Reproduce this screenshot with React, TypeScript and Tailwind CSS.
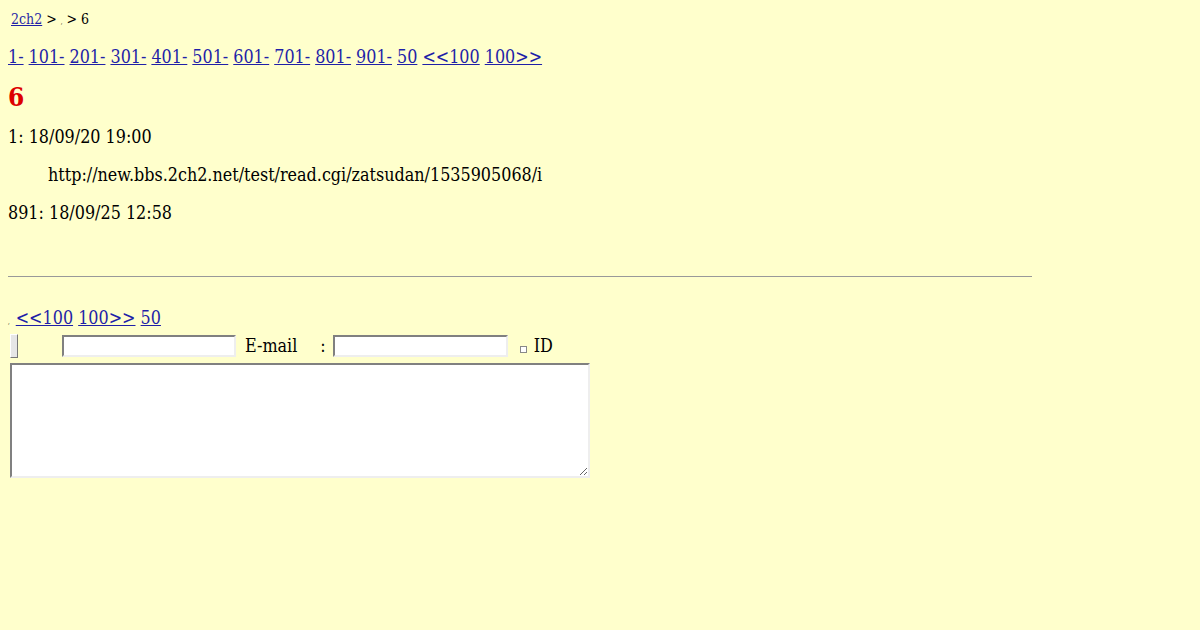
const navLinks = ['1-', '101-', '201-', '301-', '401-', '501-', '601-', '701-', '801-', '901-', '50', '<<100', '100>>'];

export default function App() {
  return (
    <div className="min-h-[630px] bg-[#ffffcc] p-2 text-black text-[17.8px] [font-family:'DejaVu_Serif',serif] [font-stretch:condensed]">
      {/* breadcrumb */}
      <div className="pl-[3px] pt-[3px] text-[14px] leading-[16px]">
        <a href="#" className="text-[#1f1fa8] underline">2ch2</a>
        <span> &gt; <span className="text-[6px]">,</span> &gt; 6</span>
      </div>

      {/* page nav */}
      <div className="mt-[17px] flex gap-[5px] leading-[20px]">
        {navLinks.map(l => (
          <a key={l} href="#" className="text-[#1f1fa8] underline">{l}</a>
        ))}
      </div>

      <h1 className="mt-[15px] text-[26px] leading-[30px] font-bold text-[#dd0000]">6</h1>

      <dl className="mt-[15px] leading-[20px]">
        <dt>1: 18/09/20 19:00</dt>
        <dd className="mt-[18px] ml-[40px]">http://new.bbs.2ch2.net/test/read.cgi/zatsudan/1535905068/i</dd>
        <dt className="mt-[18px]">891: 18/09/25 12:58</dt>
      </dl>

      <hr className="mt-[53px] w-[1024px] border-t border-[#999999]" />

      <div className="mt-[31px] leading-[20px]">
        <span className="text-[6px]">,</span>
        <a href="#" className="ml-[6px] text-[#1f1fa8] underline">&lt;&lt;100</a>{' '}
        <a href="#" className="text-[#1f1fa8] underline">100&gt;&gt;</a>{' '}
        <a href="#" className="text-[#1f1fa8] underline">50</a>
      </div>

      <form className="mt-[1px] pl-[2px]" onSubmit={e => e.preventDefault()}>
        <div className="flex items-center h-[26px]">
          <button type="submit" className="h-[24px] w-[8px] bg-[#e6e6e6] border border-t-white border-l-white border-b-[#777] border-r-[#777]" />
          <input type="text" className="ml-[44px] h-[22px] w-[174px] bg-white border-2 border-t-[#808080] border-l-[#808080] border-b-[#eeeeee] border-r-[#eeeeee]" />
          <span className="ml-[9px]">E-mail</span>
          <span className="ml-[23px]">:</span>
          <input type="text" className="ml-[7px] h-[22px] w-[175px] bg-white border-2 border-t-[#808080] border-l-[#808080] border-b-[#eeeeee] border-r-[#eeeeee]" />
          <span className="ml-[12px] mt-[6px] inline-block h-[7px] w-[7px] border border-[#888] bg-white" />
          <span className="ml-[7px]">ID</span>
        </div>
        <textarea className="mt-[4px] block h-[115px] w-[580px] resize bg-white border-2 border-t-[#808080] border-l-[#808080] border-b-[#eeeeee] border-r-[#eeeeee]" />
      </form>
    </div>
  );
}
